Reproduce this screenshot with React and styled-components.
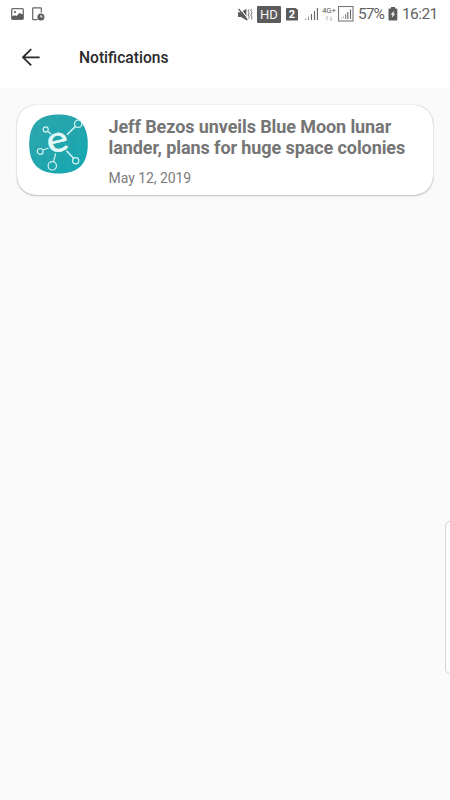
import React from "react";
import styled, { createGlobalStyle } from "styled-components";

const notifications = [
  {
    id: 1,
    title: ["Jeff Bezos unveils Blue Moon lunar", "lander, plans for huge space colonies"],
    date: "May 12, 2019",
  },
];

function StatusBar() {
  return (
    <StatusWrap>
      <StatusIcon width="13" height="12" viewBox="0 0 13 12" $left={11}>
        <rect x="0.7" y="0.7" width="11.6" height="10.6" rx="1" fill="none" stroke="#6c6c6c" strokeWidth="1.3" />
        <path d="M1 8.5 3.5 7.2 5.5 8 8.5 5 12 6.5V11H1z" fill="#5c5c5c" />
        <circle cx="4" cy="4" r="1.1" fill="#5c5c5c" />
      </StatusIcon>
      <StatusIcon width="13" height="14" viewBox="0 0 13 14" $left={8}>
        <path d="M5.5 12.7H1.3Q.7 12.7.7 12V1.5Q.7.8 1.4.8H8.6Q9.3.8 9.3 1.5V5.5" fill="none" stroke="#666" strokeWidth="1.2" />
        <circle cx="8.9" cy="10" r="3.5" fill="#5c5c5c" />
        <path d="M8.9 8v2h1.7" fill="none" stroke="#fff" strokeWidth="1" />
      </StatusIcon>
      <StatusRight>
        <StatusIcon width="15" height="13" viewBox="0 0 15 13">
          <path d="M0 4.2H3L8.4.8V12.2L3 9H0z" fill="#5c5c5c" />
          <path d="M1.6 0 10.3 11" stroke="#fff" strokeWidth="1.1" />
          <path d="M.6.8 9.3 12" stroke="#5c5c5c" strokeWidth="1.3" />
          <path d="M10.9 1.5 10.1 3.2l1.2 1.8-1.2 2 1.2 1.8-.8 1.8M13.6.8l-.8 1.8 1.3 2.2-1.3 2.2 1.3 2.2-.8 2.3" fill="none" stroke="#777" strokeWidth="1" />
        </StatusIcon>
        <HdBadge>HD</HdBadge>
        <SimBadge>2</SimBadge>
        <StatusIcon width="13" height="12" viewBox="0 0 13 12" $left={7}>
          <path d="M.7 10.5V12M3.5 8.5V12" stroke="#999" strokeWidth="1.1" />
          <path d="M6.5 6V12M9.5 3V12M12.4 0V12" stroke="#666" strokeWidth="1.1" />
        </StatusIcon>
        <Network>
          <NetworkType>4G+</NetworkType>
          <svg width="8" height="5" viewBox="0 0 8 5">
            <path d="M2 4.5V.6M.8 1.7 2 .5l1.2 1.2M6 .3v4M4.8 3.2 6 4.4l1.2-1.2" fill="none" stroke="#aaa" strokeWidth=".7" />
          </svg>
        </Network>
        <StatusIcon width="16" height="16" viewBox="0 0 16 16" $left={2}>
          <rect x="0.5" y="0.5" width="14.5" height="14.5" fill="none" stroke="#777" strokeWidth="1.1" />
          <path d="M3.5 11V13M5.5 9.5V13" stroke="#ccc" strokeWidth="1" />
          <path d="M7.6 8V13" stroke="#888" strokeWidth="1.1" />
          <path d="M9.8 6V13M12.5 3.5V13" stroke="#666" strokeWidth="1.1" />
        </StatusIcon>
        <Percent>57%</Percent>
        <StatusIcon width="10" height="14" viewBox="0 0 10 14" $left={2}>
          <path d="M3 0H7V1.5H8.5Q9.3 1.5 9.3 2.3V12.7Q9.3 13.5 8.5 13.5H1.3Q.5 13.5.5 12.7V2.3Q.5 1.5 1.3 1.5H3z" fill="#5c5c5c" />
          <path d="M6.2 3.8 2.6 7.6H4.6L3.8 10.8 7.2 6.8H5.3z" fill="#fff" />
        </StatusIcon>
        <Clock>16:21</Clock>
      </StatusRight>
    </StatusWrap>
  );
}

function AppLogo() {
  return (
    <Logo viewBox="0 0 59 60">
      <defs>
        <linearGradient id="teal" x1="0" y1="0" x2="1" y2="1">
          <stop offset="0" stopColor="#2ca6ac" />
          <stop offset="0.55" stopColor="#20a5ad" />
          <stop offset="1" stopColor="#12a9b2" />
        </linearGradient>
      </defs>
      <path d="M29.5.4C49 .4 58.8 9.5 58.8 30S49 59.5 29.5 59.5.2 50.5 .2 30 10 .4 29.5.4z" fill="url(#teal)" />
      <path d="M10 7V53M20 2V58M30 1V59M40 2V58M50 7V53M7 10H52M1 20H58M1 30H58M1 40H58M7 50H52" stroke="#45b7bc" strokeWidth=".5" opacity=".45" />
      <g fill="none" stroke="#d5f3f3" strokeWidth="1.2">
        <circle cx="16.7" cy="15.4" r="2.5" />
        <path d="M19 17.5 22 20" />
        <circle cx="49.2" cy="9.7" r="3.7" />
        <path d="M46.5 12.4 38 20.8" strokeWidth="1.5" />
        <circle cx="11.2" cy="37.4" r="2.9" />
        <path d="M14.3 36 19.5 34" />
        <circle cx="23.3" cy="51.8" r="4.2" />
        <path d="M24.5 47.5 26.7 39.5" />
        <circle cx="46.7" cy="46.7" r="3.1" />
        <path d="M44.5 44.3 37.5 36.7" strokeWidth="1.5" />
      </g>
      <LogoLetter x="0" y="0" transform="translate(30.6 37.3) rotate(-13) scale(1.12 1)">e</LogoLetter>
    </Logo>
  );
}

function App() {
  return (
    <Page>
      <GlobalStyle />
      <StatusBar />
      <Header>
        <BackIcon width="20" height="20" viewBox="0 0 20 20">
          <path d="M10.2 1.2 2 9.3l8.2 8M2.2 9.3H18.6" />
        </BackIcon>
        <HeaderTitle>Notifications</HeaderTitle>
      </Header>
      <List>
        {notifications.map((item) => (
          <Card key={item.id}>
            <AppLogo />
            <CardText>
              {item.title.map((line) => (
                <CardTitle key={line}>{line}</CardTitle>
              ))}
              <CardDate>{item.date}</CardDate>
            </CardText>
          </Card>
        ))}
      </List>
      {/* handle of the edge panel */}
      <EdgeHandle />
    </Page>
  );
}

export default App;

const GlobalStyle = createGlobalStyle`
  * {
    box-sizing: border-box;
  }
  body {
    margin: 0;
    font-family: Roboto, "Liberation Sans", sans-serif;
  }
`;

const Page = styled.div`
  position: relative;
  display: flex;
  flex-direction: column;
  width: 450px;
  height: 800px;
  overflow: hidden;
  background-color: #fafafa;
`;

const StatusWrap = styled.div`
  display: flex;
  align-items: center;
  height: 28px;
  background-color: #fefefe;
  color: #626262;
`;

const StatusRight = styled.div`
  display: flex;
  align-items: center;
  margin-left: auto;
  padding-right: 11px;
`;

const StatusIcon = styled.svg`
  flex-shrink: 0;
  margin-left: ${(props) => props.$left || 0}px;
`;

const HdBadge = styled.div`
  width: 24px;
  height: 17px;
  margin-left: 4px;
  border-radius: 1px;
  background-color: #5c5c5c;
  color: #f5f5f5;
  font-size: 13px;
  line-height: 17px;
  text-align: center;
`;

const SimBadge = styled.div`
  width: 12px;
  height: 13px;
  margin-left: 5px;
  border-radius: 1px;
  background-color: #5c5c5c;
  clip-path: polygon(0 0, 75% 0, 100% 20%, 100% 100%, 0 100%);
  color: white;
  font-size: 11px;
  font-weight: bold;
  line-height: 13px;
  text-align: center;
`;

const Network = styled.div`
  display: flex;
  flex-direction: column;
  align-items: center;
  width: 14px;
  margin-left: 4px;
`;

const NetworkType = styled.div`
  margin-top: -2px;
  margin-bottom: 1px;
  font-size: 8px;
  letter-spacing: -0.2px;
  line-height: 9px;
`;

const Percent = styled.div`
  width: 28px;
  margin-left: 4px;
  font-size: 15.5px;
  letter-spacing: -0.9px;
  white-space: nowrap;
`;

const Clock = styled.div`
  width: 37px;
  margin-left: 4px;
  font-size: 15.5px;
  letter-spacing: -0.6px;
  white-space: nowrap;
`;

const Header = styled.div`
  display: flex;
  align-items: center;
  height: 60px;
  padding-left: 21px;
  background-color: #fefefe;
`;

const BackIcon = styled.svg`
  fill: none;
  stroke: #2a2a2a;
  stroke-width: 1.8;
`;

const HeaderTitle = styled.div`
  margin-left: 38px;
  color: #2a2a2a;
  font-size: 15.6px;
  font-weight: 500;
`;

const List = styled.div`
  padding: 17px;
`;

const Card = styled.div`
  display: flex;
  height: 90px;
  padding: 9px 12px;
  border-radius: 19px;
  background-color: white;
  box-shadow: 0 0 1px rgba(0, 0, 0, 0.3), 0 1px 2px rgba(0, 0, 0, 0.22);
`;

const Logo = styled.svg`
  flex-shrink: 0;
  width: 59px;
  height: 60px;
`;

const LogoLetter = styled.text`
  fill: #e4fafa;
  stroke: #e4fafa;
  stroke-width: 0.6;
  font-family: Lato, sans-serif;
  font-size: 36px;
  text-anchor: middle;
`;

const CardText = styled.div`
  margin-left: 20.5px;
  padding-top: 3px;
`;

const CardTitle = styled.div`
  color: #757575;
  font-size: 18px;
  font-weight: bold;
  letter-spacing: -0.09px;
  line-height: 20.5px;
  white-space: nowrap;
`;

const CardDate = styled.div`
  margin-top: 11.5px;
  color: #7c7c7c;
  font-size: 14px;
  letter-spacing: -0.05px;
  line-height: 17px;
`;

const EdgeHandle = styled.div`
  position: absolute;
  top: 521px;
  right: -6px;
  width: 11px;
  height: 153px;
  border: 1px solid #d4d4d4;
  border-radius: 5px;
  background-color: #fdfdfd;
`;
